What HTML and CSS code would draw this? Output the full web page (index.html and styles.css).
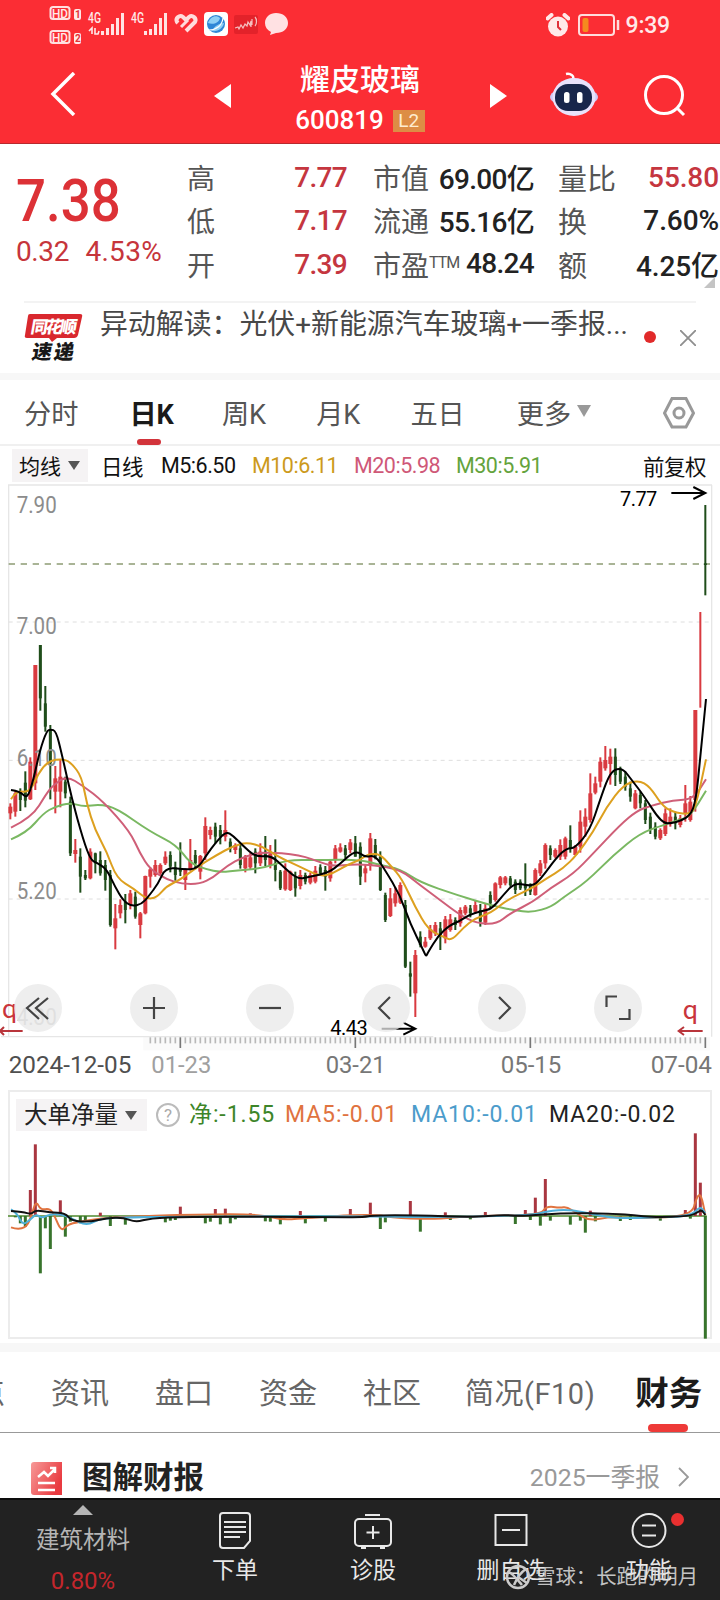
FILE: index.html
```html
<!DOCTYPE html>
<html lang="zh-CN">

<head>
    <meta charset="UTF-8">
    <meta name="viewport" content="width=device-width, initial-scale=1.0">
    <title>耀皮玻璃 600819</title>
    <link rel="stylesheet" href="styles.css">
</head>

<body>
    <header class="header">
        <div class="status-bar">
            <svg class="status-left" width="242" height="44" viewBox="48 3 242 44">
                <g class="hd">
                    <rect x="50.500" y="7" width="19" height="12" rx="2.500" />
                    <rect x="50.500" y="31" width="19" height="12" rx="2.500" />
                    <text x="52" y="18" textLength="16" lengthAdjust="spacingAndGlyphs">HD</text>
                    <text x="52" y="42" textLength="16" lengthAdjust="spacingAndGlyphs">HD</text>
                </g>
                <rect x="74" y="9" width="7" height="11" rx="2" fill="#ffe9e9" />
                <rect x="74" y="33" width="7" height="11" rx="2" fill="#ffe9e9" />
                <text class="sim" x="75" y="18">1</text>
                <text class="sim" x="75" y="42">2</text>
                <text class="net" x="88" y="23" textLength="13" lengthAdjust="spacingAndGlyphs">4G</text>
                <text class="net" x="131" y="23" textLength="13" lengthAdjust="spacingAndGlyphs">4G</text>
                <path d="M92 34V28l-3 3M95 28v6h3l1-3" fill="none" stroke="#ffe9e9" stroke-width="1.6" />
                <path d="M102.500 35v-4M107.500 35v-7M112.500 35V24M117.500 35V18M122.500 35V13M145.500 35v-4M150.500 35v-6M155.500 35V24M160.500 35V18M165.500 35V13" stroke="#ffe3e3" stroke-width="3" />
                <path d="M178 23l-1-1a4 4 0 0 1 6-5l3 3 3-3a4 4 0 0 1 6 5l-9 9" fill="none" stroke="#ffdcdc" stroke-width="4" />
                <path d="M181 27l7-7" stroke="#ffdcdc" stroke-width="3" />
                <rect x="204" y="12" width="24" height="24" rx="4" fill="#fff" />
                <circle cx="216" cy="24" r="9" fill="#2f86d6" />
                <path d="M208 23c2-6 8-9 12-5-1 5-7 7-12 5zM212 31c2-5 8-8 12-8-1 5-6 9-12 8z" fill="#8fd0f5" />
                <path d="M209 30c7 0 13-4 14-12" fill="none" stroke="#fff" stroke-width="1.200" />
                <rect x="234" y="15" width="24" height="19" rx="2" fill="#e3222a" />
                <path d="M235 28l3-1 1 2 2-4 2 3 2-4 2 2 1-4 2 3 1-4v6M252 19v6M255 17c2 2 2 7 0 9" fill="none" stroke="#f5c0c0" stroke-width="1.200" />
                <path d="M276 13c7 0 12 4 12 10s-5 10-12 10l-6 2 1-3c-4-2-6-5-6-9 0-6 5-10 11-10z" fill="#ffe1e3" />
            </svg>
            <div class="status-right">
                <svg width="24" height="24" viewBox="0 0 24 24">
                    <circle cx="12" cy="13.500" r="10" fill="#ffe9e9" />
                    <path d="M1.500 5.500l4-3.500M22.500 5.500l-4-3.500" stroke="#ffe9e9" stroke-width="4" stroke-linecap="round" />
                    <path d="M12 8v6l3 3" fill="none" stroke="#e0303a" stroke-width="2" />
                </svg>
                <svg width="42" height="22" viewBox="0 0 42 22">
                    <rect x="1" y="1" width="35" height="20" rx="3" fill="none" stroke="#ffdcdc" stroke-width="2" />
                    <rect x="4.500" y="4" width="6" height="14" rx="2" fill="#f58a1f" />
                    <path d="M40 6v10" stroke="#ffdcdc" stroke-width="2.500" />
                </svg>
                <span class="clock">9:39</span>
            </div>
        </div>
        <div class="title-bar">
            <svg class="back" width="26" height="44" viewBox="0 0 26 44"><path d="M24 1L3 22l21 21" /></svg>
            <svg class="prev" width="17" height="24" viewBox="0 0 17 24"><path d="M17 0v24L0 12z" fill="#fff" /></svg>
            <div class="stock">
                <h1>耀皮玻璃</h1>
                <div class="code">600819 <span class="level">L2</span></div>
            </div>
            <svg class="next" width="17" height="24" viewBox="0 0 17 24"><path d="M0 0v24l17-12z" fill="#fff" /></svg>
            <svg class="robot" width="50" height="46" viewBox="0 0 50 46">
                <path d="M23 9c4-4-2-7-6-6" fill="none" stroke="#fff" stroke-width="2.500" />
                <ellipse cx="25" cy="26" rx="24" ry="10" fill="#cfc8f5" />
                <ellipse cx="25" cy="26" rx="21.500" ry="19" fill="#e9e2fb" />
                <rect x="6" y="13" width="37" height="27" rx="13" fill="#18264b" />
                <rect x="15" y="21" width="5.500" height="11" rx="2.500" fill="#fff" />
                <rect x="28" y="21" width="5.500" height="11" rx="2.500" fill="#fff" />
            </svg>
            <svg class="search" width="42" height="42" viewBox="0 0 42 42">
                <circle cx="20" cy="20" r="18.500" />
                <path d="M33 33l7 7" />
            </svg>
        </div>
    </header>

    <section class="quote">
        <div class="price">
            <div class="last">7.38</div>
            <div class="change"><span>0.32</span><span>4.53%</span></div>
        </div>
        <dl class="stats stats-range">
            <dt>高</dt><dd class="up">7.77</dd>
            <dt>低</dt><dd class="up">7.17</dd>
            <dt>开</dt><dd class="up">7.39</dd>
        </dl>
        <dl class="stats stats-value">
            <dt>市值</dt><dd>69.00亿</dd>
            <dt>流通</dt><dd>55.16亿</dd>
            <dt>市盈<sup>TTM</sup></dt><dd>48.24</dd>
        </dl>
        <dl class="stats stats-trade">
            <dt>量比</dt><dd class="up">55.80</dd>
            <dt>换</dt><dd>7.60%</dd>
            <dt>额</dt><dd>4.25亿</dd>
        </dl>
        <i class="corner"></i>
    </section>

    <section class="news">
        <svg class="news-logo" width="60" height="50" viewBox="0 0 60 50">
            <path d="M6 1h50q3 0 2 3l-4 18q-1 3-4 3H33l-5 4-3-4H3q-3 0-2-3L4 3q0-2 2-2z" fill="#d9282e" />
            <text transform="translate(6 20) skewX(-10)" textLength="46" fill="#fff">同花顺</text>
            <text class="dark" transform="translate(7 46) skewX(-10)" textLength="42">速递</text>
        </svg>
        <span class="news-text">异动解读：光伏+新能源汽车玻璃+一季报...</span>
        <i class="dot"></i>
        <svg class="close" width="16" height="16" viewBox="0 0 16 16"><path d="M0 0l16 16M16 0L0 16" stroke="#8e8e8e" stroke-width="1.800" /></svg>
    </section>

    <nav class="period-tabs">
        <span class="tab">分时</span>
        <span class="tab active">日K</span>
        <span class="tab">周K</span>
        <span class="tab">月K</span>
        <span class="tab">五日</span>
        <span class="tab">更多</span>
        <i class="tri"></i>
        <svg class="hex" width="32" height="32" viewBox="0 0 32 32">
            <path d="M9 1.500h14L30.500 16 23 30H9L1.500 16z" />
            <circle cx="16" cy="16" r="5" />
        </svg>
    </nav>

    <div class="legend">
        <span class="picker">均线<i></i></span>
        <span class="day">日线</span>
        <span class="m5">M5:6.50</span>
        <span class="m10">M10:6.11</span>
        <span class="m20">M20:5.98</span>
        <span class="m30">M30:5.91</span>
        <span class="adjust">前复权</span>
    </div>

    <div class="chart">
        <!-- 3 units per pixel, y = 0 sits 146px below the top -->
        <svg id="kline" width="720" height="600" viewBox="0 -438 2160 1800">
            <rect x="430" y="1221" width="1700" height="40" fill="#fafafa" />
            <path class="frame" d="M26 1220V-437M3 1220H1300M24 -435H2136M2135 -435V1220" />
            <path class="grid" d="M26 -24H2130M26 391H2130M26 807H2130" />
            <path class="last-line" d="M26 -198H2130" />
            <g id="ticks"></g>
            <g id="candles"></g>
            <g class="axis">
                <text x="50" y="-351" textLength="120" lengthAdjust="spacingAndGlyphs">7.90</text>
                <text x="50" y="12" textLength="120" lengthAdjust="spacingAndGlyphs">7.00</text>
                <text x="50" y="409" textLength="120" lengthAdjust="spacingAndGlyphs">6.10</text>
                <text x="50" y="806" textLength="120" lengthAdjust="spacingAndGlyphs">5.20</text>
                <text class="faint" x="50" y="1185" textLength="120" lengthAdjust="spacingAndGlyphs">4.30</text>
            </g>
            <g id="lines"></g>
            <g class="marks">
                <text x="1860" y="-373" textLength="112">7.77</text>
                <path d="M2014 -411H2116M2080 -429L2116 -411 2080 -393" />
                <text x="991" y="1216" textLength="112">4.43</text>
                <path d="M1145 1196H1246M1210 1178L1246 1196 1210 1214" />
            </g>
            <g class="rights">
                <text x="6" y="1165">q</text>
                <path d="M68 1203H0M12 1191L0 1203 12 1215" />
                <text x="2048" y="1167">q</text>
                <path d="M2108 1203H2036M2052 1191L2036 1203 2052 1215" />
            </g>
            <g class="dates">
                <text class="first" x="26" y="1328" textLength="368" lengthAdjust="spacingAndGlyphs">2024-12-05</text>
                <text class="second" x="454" y="1328" textLength="180" lengthAdjust="spacingAndGlyphs">01-23</text>
                <text x="977" y="1328" textLength="180" lengthAdjust="spacingAndGlyphs">03-21</text>
                <text x="1502" y="1328" textLength="182" lengthAdjust="spacingAndGlyphs">05-15</text>
                <text x="1952" y="1328" textLength="184" lengthAdjust="spacingAndGlyphs">07-04</text>
            </g>
        </svg>
        <div class="tools">
            <span><svg viewBox="0 0 48 48"><path d="M36 14L24 24l12 11M27 14L15 24l12 11" transform="translate(-2 0)" /></svg></span>
            <span><svg viewBox="0 0 48 48"><path d="M13 24h22M24 13v22" /></svg></span>
            <span><svg viewBox="0 0 48 48"><path d="M13 24h22" /></svg></span>
            <span><svg viewBox="0 0 48 48"><path d="M28 13L17 24l11 11" /></svg></span>
            <span><svg viewBox="0 0 48 48"><path d="M21 13l11 11-11 11" /></svg></span>
            <span><svg viewBox="0 0 48 48"><path d="M23 12.500H12.500V23M25 35h10.500V25" /></svg></span>
        </div>
    </div>

    <div class="flow">
        <div class="flow-legend">
            <span class="picker">大单净量<i></i></span>
            <span class="help">?</span>
            <span class="net-val">净:-1.55</span>
            <span class="ma5">MA5:-0.01</span>
            <span class="ma10">MA10:-0.01</span>
            <span class="ma20">MA20:-0.02</span>
        </div>
        <svg id="flow" width="720" height="207" viewBox="0 156 2160 621">
            <path d="M24 408H2120" stroke="#4f8a2e" stroke-width="5" />
            <g id="bars"></g>
            <g id="flowLines"></g>
        </svg>
    </div>

    <nav class="main-tabs">
        <span class="cut">点</span>
        <span>资讯</span>
        <span>盘口</span>
        <span>资金</span>
        <span>社区</span>
        <span class="f10">简况(F10)</span>
        <span class="active">财务</span>
    </nav>

    <section class="report">
        <svg width="36" height="36" viewBox="0 0 36 36">
            <defs>
                <linearGradient id="rep" x1="0" y1="0" x2="1" y2="0.500">
                    <stop offset="0" stop-color="#f79a98" />
                    <stop offset="1" stop-color="#e93a40" />
                </linearGradient>
            </defs>
            <path d="M3 0h28v33H3q-3 0-3-3V3q0-3 3-3z" fill="url(#rep)" />
            <path d="M7 15l6-5 4 4 7-7M19 6h5v5M7 21h17M7 28h17" fill="none" stroke="#fff" stroke-width="2.500" />
        </svg>
        <h2>图解财报</h2>
        <span class="season">2025一季报</span>
        <svg class="more" width="11" height="20" viewBox="0 0 11 20"><path d="M1 1l9 9-9 9" fill="none" stroke="#999" stroke-width="1.800" /></svg>
    </section>

    <footer class="bottom-bar">
        <div class="sector">
            <i></i>
            <span>建筑材料</span>
            <b>0.80%</b>
        </div>
        <div class="item">
            <svg width="34" height="38" viewBox="0 0 34 38">
                <path d="M5 1h24q3 0 3 3v25l-6 7H5q-3 0-3-3V4q0-3 3-3zM6 10h22M6 15h22M6 20h22M6 25h16" />
            </svg>
            <span>下单</span>
        </div>
        <div class="item">
            <svg width="40" height="38" viewBox="0 0 40 38">
                <rect x="2" y="7" width="36" height="27" rx="4" />
                <path d="M12 3h15M20 14v13M13.500 20.500h13M8 36h5M27 36h5" />
            </svg>
            <span>诊股</span>
        </div>
        <div class="item">
            <svg width="34" height="38" viewBox="0 0 34 38">
                <rect x="1.500" y="3" width="31" height="30" />
                <path d="M8 18h18" />
            </svg>
            <span>删自选</span>
        </div>
        <div class="item">
            <svg width="36" height="38" viewBox="0 0 36 38">
                <circle cx="18" cy="18.500" r="16.500" />
                <path d="M11 13.500h14M11 23.500h14" />
            </svg>
            <span>功能</span>
            <i class="badge"></i>
        </div>
        <div class="watermark">
            <svg width="26" height="26" viewBox="0 0 26 26">
                <circle cx="13" cy="13" r="11" />
                <path d="M4 8c4 2 8 7 13 13M21 5c-5 3-9 9-12 16M13 13l9 6" />
            </svg>
            <span>雪球：长跑的明月</span>
        </div>
    </footer>

    <script src="chart.js"></script>
</body>

</html>
```
FILE: styles.css
```css
*,
*::before,
*::after {
    box-sizing: border-box;
    margin: 0;
    padding: 0;
}

body {
    width: 720px;
    height: 1600px;
    overflow: hidden;
    font-family: Roboto, "Noto Sans CJK SC", sans-serif;
    background-color: #fff;
    color: #222;
}

svg {
    display: block;
    flex-shrink: 0;
}

i {
    display: block;
    flex-shrink: 0;
}

span {
    white-space: nowrap;
}

/* header */
.header {
    height: 144px;
    background-color: #fb2d34;
    border-bottom: 1px solid #b8292e;
}

.status-bar {
    display: flex;
    justify-content: space-between;
    height: 50px;
    padding: 3px 50px 0 48px;
}

.hd rect {
    fill: none;
    stroke: #ffe0e0;
    stroke-width: 2;
}

.hd text {
    font-size: 13px;
    font-weight: 500;
    fill: #ffe9e9;
}

.sim {
    font-size: 10px;
    font-weight: 700;
    fill: #e2343a;
}

.net {
    font-size: 14px;
    font-weight: 500;
    fill: #ffe9e9;
}

.status-right {
    display: flex;
    align-items: center;
    height: 44px;
}

.status-right svg + svg {
    margin-left: 8px;
}

.clock {
    margin-left: 6px;
    font-size: 23px;
    font-weight: 500;
    letter-spacing: -0.2px;
    color: #ffe9e9;
}

.title-bar {
    display: flex;
    height: 93px;
    color: #fff;
}

.back {
    margin: 22px 0 0 50px;
    fill: none;
    stroke: #fff;
    stroke-width: 3.5;
}

.prev {
    margin: 34px 0 0 138px;
}

.stock {
    width: 260px;
    text-align: center;
}

.stock h1 {
    margin: 8px 2px 0 0;
    font-size: 30px;
    line-height: 44px;
    font-weight: 500;
}

.code {
    display: flex;
    justify-content: center;
    align-items: center;
    margin-right: 2px;
    line-height: 36px;
    font-size: 26px;
    font-weight: 500;
}

.level {
    width: 32px;
    height: 22px;
    margin: 1px 0 0 9px;
    line-height: 22px;
    font-size: 19px;
    font-weight: 400;
    color: #ffecd0;
    background-color: #dd8d45;
}

.next {
    margin: 34px 0 0 -1px;
}

.robot {
    margin: 21px 0 0 42px;
}

.search {
    margin: 25px 0 0 45px;
    fill: none;
    stroke: #fff;
    stroke-width: 3;
}

/* quote */
.quote {
    display: flex;
    position: relative;
    height: 157px;
    padding-top: 11px;
}

.price {
    width: 187px;
    padding-left: 16px;
    color: #dc3136;
}

.last {
    margin-top: 13px;
    font-size: 60px;
    line-height: 66px;
    font-weight: 500;
    transform: scaleX(0.88);
    transform-origin: left;
}

.change {
    display: flex;
    justify-content: space-between;
    width: 146px;
    margin-top: 1px;
    font-size: 28px;
    line-height: 34px;
    letter-spacing: -0.4px;
    color: #c6353b;
}

.change span + span {
    letter-spacing: 0.3px;
}

.stats {
    display: grid;
    grid-template-columns: auto 1fr;
    grid-auto-rows: 43.5px;
    align-items: center;
    font-size: 28px;
}

.stats dt {
    color: #555;
    white-space: nowrap;
}

.stats dd {
    justify-self: end;
    font-weight: 500;
    letter-spacing: -0.7px;
    white-space: nowrap;
}

.stats .up {
    padding-top: 1px;
    color: #c5363f;
}

.stats-range {
    width: 160px;
}

.stats-value {
    width: 161px;
    margin-left: 26px;
}

/* the TTM label is wider than the first column needs to be */
.stats-value dd {
    margin-left: -30px;
}

.stats-value sup {
    font-size: 16px;
    line-height: 0;
    vertical-align: 8px;
    letter-spacing: -1px;
}

.stats-trade {
    width: 161px;
    margin-left: 24px;
}

.stats-trade dt {
    font-size: 29px;
}

.stats-trade dd {
    letter-spacing: -0.1px;
}

.corner {
    position: absolute;
    right: 5px;
    bottom: 13px;
    border-left: 11px solid transparent;
    border-bottom: 11px solid #c4c4c4;
}

/* news line */
.news {
    display: flex;
    height: 72px;
    margin: 0 24px;
    border-top: 2px solid #f3f3f3;
}

.news-logo {
    margin-top: 10px;
}

.news-logo text {
    font-size: 17px;
    font-weight: 900;
}

.news-logo .dark {
    font-size: 20px;
    fill: #181818;
}

.news-text {
    width: 528px;
    margin-left: 16px;
    font-size: 27.9px;
    line-height: 43px;
    color: #484848;
}

.dot {
    width: 12px;
    height: 12px;
    margin: 28px 0 0 16px;
    border-radius: 50%;
    background-color: #e12a2a;
}

.close {
    margin: 27px 0 0 24px;
}

/* period tabs */
.period-tabs {
    display: flex;
    align-items: center;
    height: 73px;
    padding-left: 24px;
    border-top: 7px solid #f7f7f7;
    border-bottom: 2px solid #f0f0f0;
    font-size: 27.2px;
    color: #555;
}

.tab {
    height: 64px;
    margin-right: 50px;
    line-height: 70px;
}

.tab.active {
    position: relative;
    margin-right: 48px;
    margin-left: 1px;
    font-weight: 700;
    color: #1a1a1a;
}

.tab.active::after {
    content: '';
    position: absolute;
    left: 8px;
    bottom: -1px;
    width: 24px;
    height: 6px;
    border-radius: 3px;
    background-color: #d2343b;
}

.period-tabs .tab:nth-child(6) {
    margin-left: 2px;
}

.period-tabs .tri {
    margin: -2px 0 0 -44px;
    border: 7.5px solid transparent;
    border-top: 12px solid #999;
    border-bottom: 0;
}

.hex {
    margin: 1px 0 0 72px;
    fill: none;
    stroke: #999;
    stroke-width: 3;
}

/* legends */
.legend {
    display: flex;
    align-items: center;
    height: 38px;
    padding-left: 12px;
    font-size: 21.5px;
    letter-spacing: -0.5px;
    color: #111;
}

.picker {
    display: flex;
    align-items: center;
    background-color: #f5f3f4;
    letter-spacing: 0;
}

.picker i {
    margin-left: 7px;
    border: 6px solid transparent;
    border-top: 9px solid #555;
    border-bottom: 0;
}

.legend .picker {
    width: 76px;
    height: 33px;
    padding-left: 7px;
    font-size: 21px;
}

.legend .day {
    width: 60px;
    margin-left: 13px;
}

.legend .m5 {
    width: 91px;
}

.legend .m10 {
    width: 102px;
    color: #cc9a1c;
}

.legend .m20 {
    width: 102px;
    color: #cf5878;
}

.legend .m30 {
    width: 187px;
    color: #64a33c;
}

/* k-line chart */
.chart {
    position: relative;
    height: 600px;
}

.chart text {
    font-size: 70px;
}

.frame {
    fill: none;
    stroke: #e6e6e6;
    stroke-width: 4;
}

.grid {
    stroke: #dedede;
    stroke-width: 3;
    stroke-dasharray: 12 12;
}

.last-line {
    stroke: #8d9c74;
    stroke-width: 5;
    stroke-dasharray: 19 17;
}

.axis text {
    fill: #8c8c8c;
}

.axis .faint {
    fill: #c4c4c4;
}

.marks path {
    fill: none;
    stroke: #000;
    stroke-width: 6;
}

.marks text {
    font-size: 60px;
}

.rights text {
    font-size: 80px;
    fill: #c9353c;
}

.rights path {
    fill: none;
    stroke: #b9353b;
    stroke-width: 6;
}

.dates text {
    fill: #777;
}

.dates .first {
    fill: #4f4f4f;
}

.dates .second {
    fill: #a0a0a0;
}

.tools {
    display: flex;
    gap: 68px;
    position: absolute;
    left: 14px;
    top: 500px;
}

.tools span {
    width: 48px;
    height: 48px;
    border-radius: 50%;
    background-color: rgba(232, 232, 232, 0.75);
}

.tools path {
    fill: none;
    stroke: #444;
    stroke-width: 2.2;
}

/* money flow chart */
.flow {
    position: relative;
    height: 268px;
    padding-top: 8px;
    border-bottom: 9px solid #f7f7f7;
}

.flow::before {
    content: '';
    position: absolute;
    left: 8px;
    top: 6px;
    width: 704px;
    height: 249px;
    border: 2px solid #ececec;
}

.flow-legend {
    display: flex;
    position: relative;
    align-items: center;
    height: 40px;
    padding: 6px 0 0 16px;
    font-size: 23px;
    line-height: 32px;
    letter-spacing: 0.9px;
}

.flow-legend .picker {
    width: 131px;
    height: 32px;
    padding-left: 8px;
    font-size: 23.5px;
}

.help {
    width: 24px;
    height: 24px;
    margin-left: 9px;
    border: 2px solid #bbb;
    border-radius: 50%;
    font-size: 17px;
    line-height: 20px;
    letter-spacing: 0;
    text-align: center;
    color: #aaa;
}

.net-val {
    width: 96px;
    margin-left: 9px;
    color: #3d8529;
}

.ma5 {
    width: 126px;
    color: #e0733f;
}

.ma10 {
    width: 138px;
    color: #4c9ccb;
}

#flow {
    position: relative;
}

/* main tabs */
.main-tabs {
    display: flex;
    height: 81px;
    border-bottom: 1px solid #999;
    font-size: 29px;
    color: #666;
}

.main-tabs span {
    height: 80px;
    margin-right: 46px;
    line-height: 84px;
}

.main-tabs .cut {
    margin-left: -24px;
}

.main-tabs .f10 {
    margin-left: -2px;
    margin-right: 40px;
    letter-spacing: 0.5px;
}

.main-tabs .active {
    position: relative;
    margin-right: 0;
    font-size: 33.5px;
    font-weight: 700;
    color: #1c1c1c;
}

.main-tabs .active::after {
    content: '';
    position: absolute;
    left: 13px;
    bottom: 0;
    width: 40px;
    height: 8px;
    border-radius: 4px;
    background-color: #ee3a38;
}

/* report */
.report {
    display: flex;
    align-items: center;
    height: 65px;
    padding: 29px 31px 0;
}

.report h2 {
    margin: -5px 0 0 15px;
    font-size: 30.5px;
    line-height: 34px;
    font-weight: 700;
}

.season {
    margin: -5px 18px 0 auto;
    font-size: 24.8px;
    line-height: 30px;
    color: #999;
}

.more {
    margin-top: -6px;
}

/* bottom bar */
.bottom-bar {
    display: flex;
    position: relative;
    height: 102px;
    border-top: 2px solid #0d0d0d;
    background-color: #222;
    color: #e8e8e8;
}

.sector {
    display: flex;
    flex-direction: column;
    align-items: center;
    width: 166px;
    padding-top: 5px;
    font-size: 23.5px;
    color: #b5b5b5;
}

.sector i {
    border: 10px solid transparent;
    border-top: 0;
    border-bottom: 10px solid #b5b5b5;
}

.sector span {
    margin-top: 9px;
    line-height: 32px;
}

.sector b {
    margin-top: 10px;
    font-size: 24px;
    line-height: 30px;
    font-weight: 400;
    color: #c4262c;
}

.item {
    display: flex;
    flex-direction: column;
    align-items: center;
    position: relative;
    width: 138px;
    padding-top: 12px;
    font-size: 23px;
}

.item svg {
    fill: none;
    stroke: #e8e8e8;
    stroke-width: 2;
}

.item span {
    margin-top: 5px;
    line-height: 32px;
}

.badge {
    position: absolute;
    left: 91px;
    top: 13px;
    width: 13px;
    height: 13px;
    border-radius: 50%;
    background-color: #e93030;
}

.watermark {
    display: flex;
    align-items: center;
    position: absolute;
    left: 505px;
    top: 63px;
    font-size: 20.4px;
    line-height: 28px;
    color: rgba(225, 225, 225, 0.85);
}

.watermark svg {
    margin-right: 4px;
    fill: none;
    stroke: #ccc;
    stroke-width: 2.5;
}
```
FILE: chart.js
```js
const NS = 'http://www.w3.org/2000/svg';
const STEP = 15;
const RED = '#d93a40';
const GREEN = '#1f4d1a';

// [up?, high, body top, body bottom, low]
const candles = [
    [1, 520, 530, 550, 568], [1, 482, 490, 545, 560], [0, 475, 485, 510, 543], [0, 424, 458, 512, 532],
    [1, 382, 395, 508, 510], [1, 105, 105, 460, 480], [0, 45, 45, 205, 242], [0, 168, 220, 290, 305],
    [0, 285, 300, 400, 508], [1, 408, 445, 485, 550], [1, 390, 440, 485, 532], [0, 440, 455, 490, 505],
    [0, 500, 515, 670, 678], [1, 627, 660, 672, 698], [0, 655, 680, 740, 788], [0, 720, 735, 745, 750],
    [1, 655, 665, 745, 748], [0, 668, 670, 700, 730], [0, 664, 690, 730, 737], [0, 690, 705, 750, 782],
    [0, 720, 735, 885, 890], [1, 822, 865, 895, 958], [1, 808, 825, 850, 865], [0, 792, 815, 840, 880],
    [1, 780, 790, 825, 838], [0, 785, 800, 860, 866], [1, 846, 850, 885, 925], [1, 737, 738, 850, 853],
    [1, 712, 718, 740, 773], [1, 690, 705, 735, 740], [1, 700, 705, 730, 738], [1, 664, 680, 700, 705],
    [0, 664, 675, 710, 727], [0, 695, 712, 735, 752], [0, 637, 715, 725, 738], [1, 715, 718, 750, 780],
    [1, 627, 690, 720, 722], [0, 660, 675, 700, 718], [1, 675, 678, 725, 748], [1, 562, 588, 670, 690],
    [1, 590, 600, 615, 628], [0, 578, 590, 620, 641], [0, 585, 600, 620, 643], [1, 541, 600, 620, 634],
    [0, 625, 635, 655, 667], [1, 640, 645, 660, 672], [0, 640, 655, 705, 716], [1, 675, 682, 715, 727],
    [1, 668, 682, 712, 720], [0, 655, 665, 700, 730], [1, 640, 665, 700, 708], [0, 618, 665, 690, 708],
    [1, 645, 672, 705, 715], [0, 628, 700, 720, 754], [0, 720, 725, 775, 780], [1, 700, 722, 778, 782],
    [1, 722, 725, 780, 783], [0, 725, 740, 775, 800], [1, 720, 735, 768, 778], [0, 728, 735, 755, 763],
    [1, 728, 735, 758, 763], [1, 708, 722, 755, 760], [0, 703, 712, 730, 735], [0, 708, 720, 740, 782],
    [1, 690, 695, 745, 755], [1, 645, 655, 690, 700], [1, 640, 652, 665, 668], [0, 645, 655, 675, 685],
    [1, 627, 637, 660, 670], [0, 618, 640, 680, 680], [0, 637, 650, 740, 765], [1, 705, 715, 730, 757],
    [1, 609, 625, 705, 722], [0, 627, 645, 680, 688], [0, 664, 680, 780, 783], [0, 788, 795, 870, 876],
    [1, 774, 805, 858, 861], [1, 772, 790, 820, 830], [1, 757, 765, 818, 822], [0, 810, 825, 1010, 1014],
    [0, 995, 1030, 1040, 1100], [1, 960, 975, 1090, 1161], [0, 904, 920, 945, 952], [1, 921, 935, 950, 953],
    [1, 885, 898, 925, 930], [1, 876, 885, 910, 918], [0, 876, 895, 920, 960], [1, 858, 868, 925, 940],
    [1, 852, 868, 900, 905], [0, 862, 870, 885, 900], [1, 832, 840, 880, 890], [1, 825, 830, 850, 856],
    [0, 825, 835, 850, 862], [1, 810, 825, 845, 852], [0, 822, 840, 875, 890], [1, 822, 835, 878, 885],
    [0, 784, 795, 820, 838], [1, 757, 760, 810, 815], [1, 738, 742, 765, 775], [1, 738, 742, 760, 766],
    [0, 738, 745, 765, 770], [0, 748, 755, 780, 792], [0, 748, 755, 775, 780], [0, 700, 765, 775, 798],
    [0, 760, 765, 785, 795], [1, 715, 720, 795, 797], [1, 690, 700, 730, 738], [1, 640, 645, 700, 716],
    [0, 646, 655, 675, 690], [1, 655, 660, 680, 685], [1, 628, 645, 680, 690], [1, 620, 625, 680, 688],
    [0, 586, 630, 655, 668], [1, 645, 650, 675, 675], [1, 541, 575, 650, 668], [1, 535, 560, 590, 620],
    [1, 430, 490, 570, 578], [1, 440, 460, 488, 493], [1, 382, 395, 455, 472], [1, 348, 390, 415, 422],
    [1, 356, 380, 402, 464], [0, 355, 380, 435, 468], [0, 410, 420, 455, 462], [0, 425, 440, 470, 482],
    [0, 455, 475, 500, 515], [1, 480, 490, 535, 538], [0, 485, 495, 520, 535], [0, 510, 520, 570, 582],
    [0, 548, 560, 600, 612], [0, 577, 590, 620, 628], [1, 595, 600, 625, 630], [1, 535, 550, 612, 618],
    [1, 535, 560, 580, 590], [0, 545, 560, 580, 598], [1, 555, 565, 585, 592], [1, 465, 520, 550, 575],
    [1, 498, 515, 570, 575], [1, 240, 240, 510, 545], [1, -54, 0, 0, 233], [0, -375, -200, -195, -104]
];

const averages = [
    ['#7ab862', [33, 628, 80, 608, 130, 550, 165, 530, 210, 518, 250, 530, 300, 523, 350, 535, 450, 605, 530, 645, 570, 700, 620, 718, 660, 727, 720, 720, 790, 715, 860, 690, 950, 690, 1080, 688, 1140, 705, 1200, 717, 1260, 757, 1370, 795, 1480, 828, 1540, 840, 1595, 848, 1655, 830, 1690, 802, 1760, 755, 1840, 675, 1920, 610, 1990, 585, 2030, 572, 2070, 560, 2118, 482]],
    ['#cf5f78', [33, 593, 95, 563, 140, 490, 160, 465, 200, 438, 250, 468, 310, 515, 390, 605, 420, 670, 450, 718, 500, 748, 545, 762, 600, 762, 640, 742, 680, 708, 730, 680, 790, 665, 900, 675, 970, 700, 1000, 708, 1060, 703, 1120, 705, 1200, 718, 1260, 765, 1320, 810, 1380, 855, 1430, 880, 1490, 882, 1530, 850, 1600, 815, 1650, 775, 1720, 732, 1780, 670, 1860, 585, 1910, 543, 1950, 528, 2020, 510, 2080, 508, 2118, 448]],
    ['#dda01f', [33, 508, 48, 483, 90, 487, 115, 430, 145, 393, 190, 386, 215, 400, 245, 440, 260, 520, 285, 600, 320, 665, 350, 745, 400, 775, 440, 807, 470, 803, 500, 768, 540, 750, 590, 712, 650, 675, 700, 648, 740, 637, 790, 650, 830, 678, 900, 710, 960, 740, 1000, 730, 1040, 705, 1080, 690, 1105, 672, 1140, 672, 1170, 705, 1205, 745, 1245, 830, 1285, 900, 1330, 920, 1355, 932, 1390, 893, 1425, 865, 1475, 848, 1520, 810, 1595, 775, 1640, 745, 1690, 715, 1730, 675, 1780, 605, 1820, 530, 1870, 465, 1915, 450, 1950, 470, 1985, 525, 2015, 545, 2070, 555, 2090, 520, 2118, 388]],
    ['#000', [33, 480, 60, 484, 82, 507, 100, 450, 120, 360, 140, 303, 152, 298, 168, 303, 185, 370, 215, 505, 250, 630, 272, 690, 290, 698, 320, 717, 345, 770, 370, 812, 395, 829, 425, 822, 445, 800, 475, 760, 497, 712, 550, 718, 592, 717, 620, 675, 645, 640, 678, 604, 700, 618, 730, 648, 765, 680, 815, 677, 850, 710, 893, 748, 930, 740, 985, 728, 1020, 702, 1066, 660, 1095, 682, 1125, 675, 1155, 720, 1200, 795, 1230, 880, 1272, 965, 1278, 980, 1284, 967, 1315, 917, 1350, 885, 1380, 873, 1410, 853, 1445, 843, 1475, 837, 1510, 795, 1545, 757, 1595, 770, 1620, 750, 1670, 682, 1700, 655, 1725, 655, 1770, 600, 1800, 510, 1825, 440, 1845, 417, 1870, 417, 1895, 450, 1930, 495, 1985, 580, 2020, 580, 2070, 560, 2088, 510, 2100, 390, 2118, 207]]
];

// day index -> bar end, zero line at 408
const ZERO = 408;
const bars = {
    1: 412, 2: 430, 3: 440, 4: 330, 5: 193, 6: 580, 7: 445, 8: 507, 10: 361, 11: 470, 12: 425, 14: 430, 15: 425,
    18: 398, 20: 438, 23: 434, 31: 427, 32: 422, 33: 420, 34: 380, 39: 430, 40: 425, 41: 387, 42: 433, 43: 386,
    44: 430, 45: 418, 48: 400, 51: 424, 52: 425, 54: 433, 58: 393, 59: 430, 63: 425, 68: 387, 72: 368, 74: 447,
    75: 427, 80: 363, 82: 455, 87: 397, 88: 420, 92: 418, 95: 396, 101: 432, 103: 390, 104: 420, 105: 353,
    106: 437, 107: 297, 108: 422, 112: 434, 114: 422, 115: 458, 116: 392, 117: 424, 122: 423, 124: 420,
    130: 422, 135: 390, 136: 416, 137: 160, 138: 308, 139: 776
};

const flowLines = [
    ['#e0733f', [33, 442, 50, 448, 80, 442, 95, 405, 108, 362, 122, 390, 150, 385, 165, 410, 183, 453, 200, 438, 215, 430, 260, 422, 330, 412, 600, 403, 780, 403, 850, 420, 900, 415, 1110, 402, 1200, 415, 1320, 417, 1400, 408, 1620, 405, 1640, 378, 1680, 384, 1700, 380, 1730, 400, 1770, 423, 1830, 410, 1920, 416, 2075, 408, 2090, 350, 2103, 342, 2116, 405]],
    ['#4fb0da', [33, 388, 50, 398, 68, 435, 90, 420, 108, 402, 125, 415, 150, 402, 185, 403, 215, 415, 260, 438, 300, 415, 400, 412, 500, 410, 1080, 408, 1290, 412, 1600, 406, 1640, 393, 1710, 388, 1790, 405, 1850, 415, 1960, 413, 2075, 408, 2100, 378, 2116, 400]],
    ['#111', [33, 393, 70, 396, 92, 403, 108, 390, 150, 398, 195, 398, 215, 423, 270, 426, 320, 414, 370, 412, 407, 427, 450, 415, 560, 410, 1000, 411, 1090, 412, 1120, 406, 1250, 406, 1420, 412, 1510, 404, 1560, 409, 1700, 398, 1850, 402, 1900, 405, 1960, 412, 2070, 409, 2095, 395, 2105, 390, 2116, 405]]
];

function add(parent, tag, attrs) {
    const el = document.createElementNS(NS, tag);
    for (const key in attrs) {
        el.setAttribute(key, attrs[key]);
    }
    parent.appendChild(el);
}

// round the corners by passing through the midpoints
function smooth(p) {
    let d = 'M' + p[0] + ' ' + p[1];
    for (let i = 2; i < p.length - 2; i += 2) {
        const mx = (p[i] + p[i + 2]) / 2;
        const my = (p[i + 1] + p[i + 3]) / 2;
        d += 'Q' + p[i] + ' ' + p[i + 1] + ' ' + mx + ' ' + my;
    }
    return d + 'L' + p[p.length - 2] + ' ' + p[p.length - 1];
}

function drawLines(id, list, width) {
    const g = document.getElementById(id);
    list.forEach(([color, points]) => {
        add(g, 'path', { d: smooth(points), fill: 'none', stroke: color, 'stroke-width': width });
    });
}

const candleGroup = document.getElementById('candles');
candles.forEach(([up, high, top, bottom, low], i) => {
    const x = 31 + STEP * i;
    const fill = up ? RED : GREEN;
    add(candleGroup, 'rect', { x: x - 3, y: high, width: 6, height: low - high, fill });
    add(candleGroup, 'rect', { x: up ? x - 6 : x - 4.5, y: top, width: up ? 12 : 9, height: bottom - top, fill });
});

const ticks = document.getElementById('ticks');
for (let i = 28; i < 140; i++) {
    const major = (i + 1) % 35 === 0;
    add(ticks, 'rect', { x: 28.5 + STEP * i, y: 1222, width: 5, height: major ? 32 : 18, fill: major ? '#777' : '#b8b8b8' });
}

const barGroup = document.getElementById('bars');
Object.keys(bars).forEach(i => {
    const end = bars[i];
    add(barGroup, 'rect', {
        x: 26.5 + STEP * i,
        y: Math.min(end, ZERO),
        width: 9,
        height: Math.abs(end - ZERO),
        fill: end < ZERO ? '#a93640' : '#38742c'
    });
});

drawLines('lines', averages, 6);
drawLines('flowLines', flowLines, 6);
```
